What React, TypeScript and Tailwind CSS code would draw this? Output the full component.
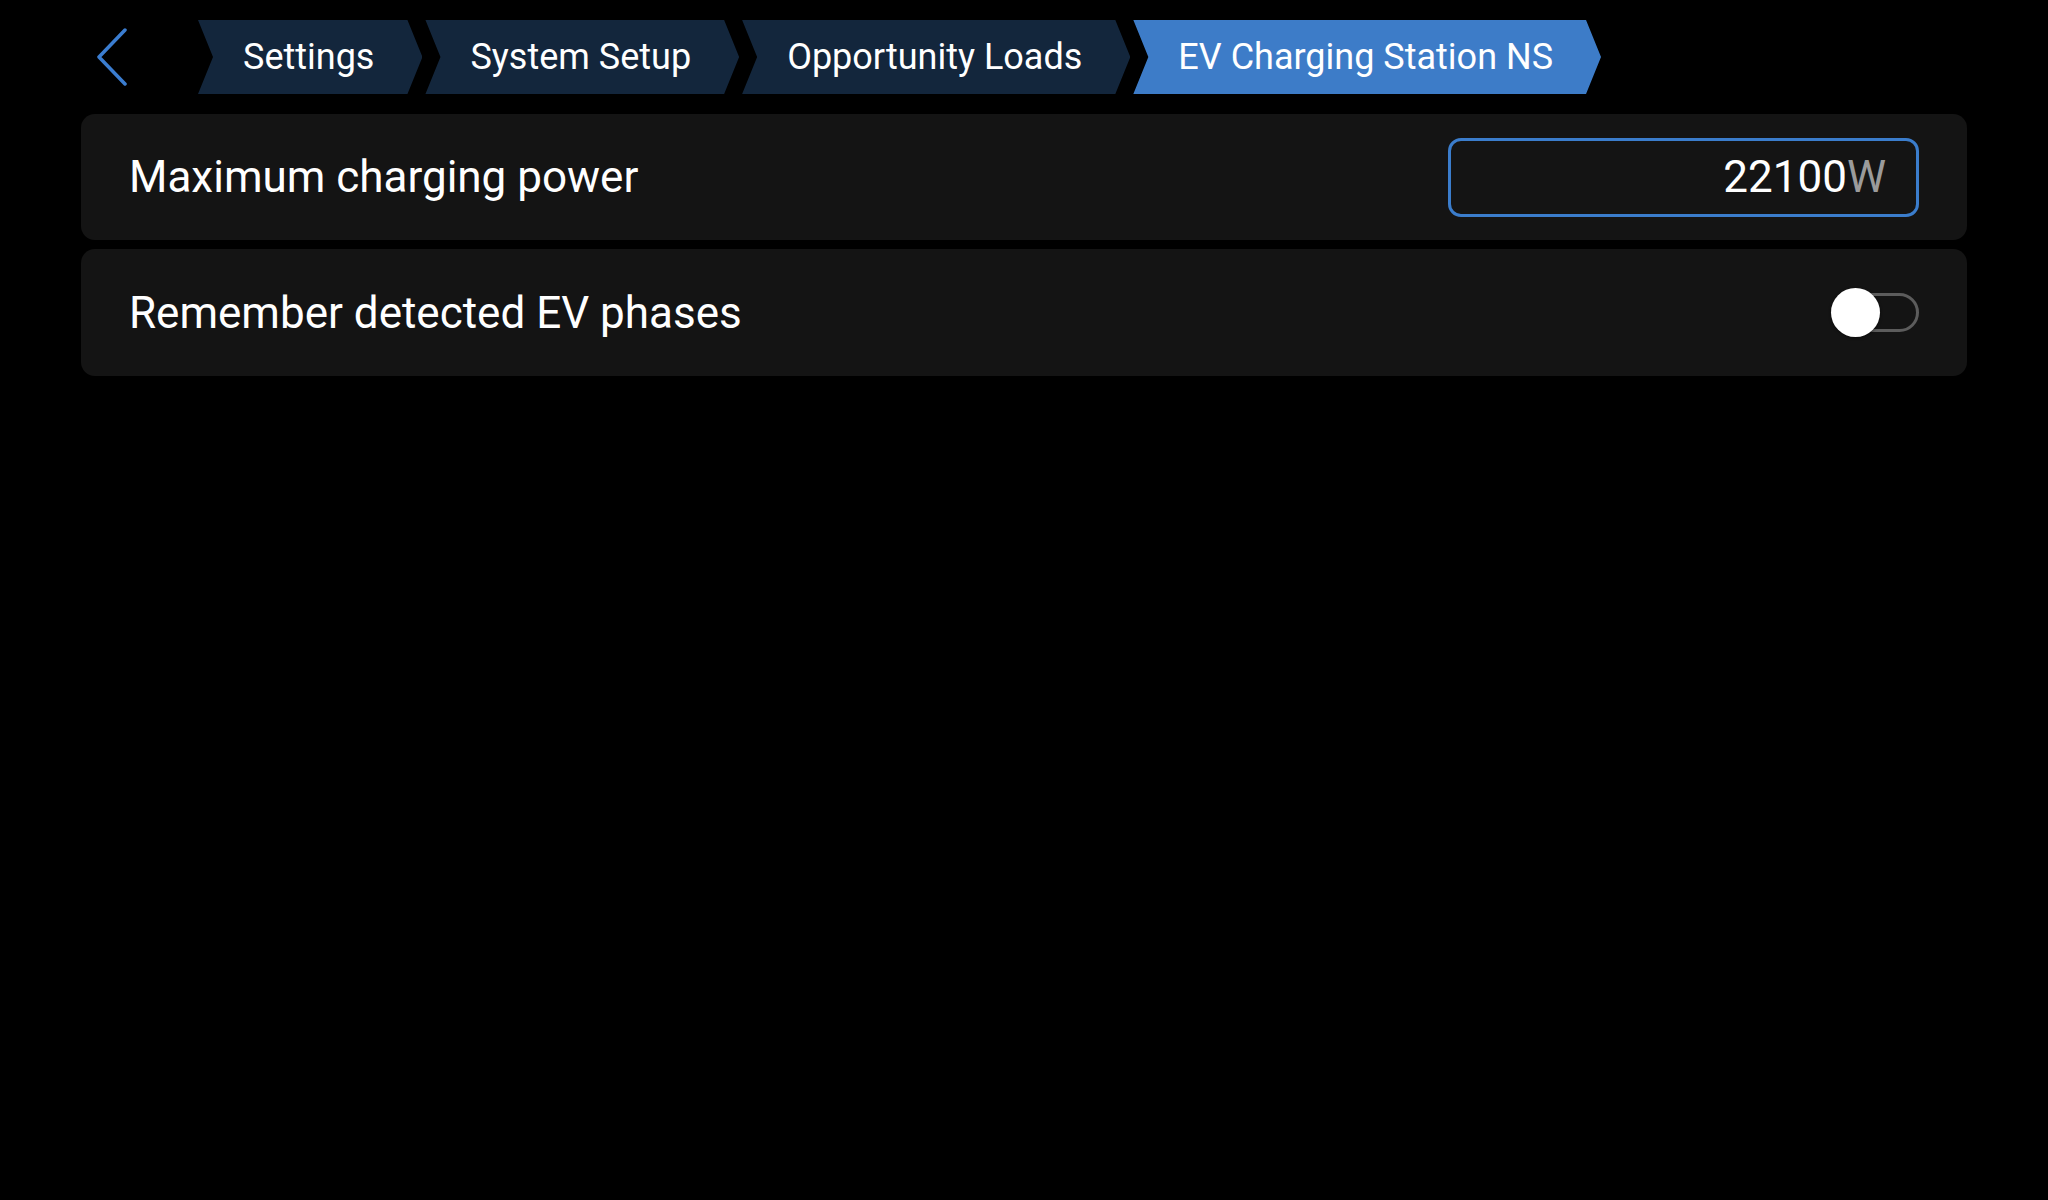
import { useState } from 'react';

const crumbs = ['Settings', 'System Setup', 'Opportunity Loads', 'EV Charging Station NS'];

function Crumb({ label, active }: { label: string; active: boolean }) {
  return (
    <div
      className={`flex h-[74px] items-center pl-[45px] pr-[48px] text-[36px] text-white [clip-path:polygon(0_0,calc(100%-15px)_0,100%_50%,calc(100%-15px)_100%,0_100%,15px_50%)] ${
        active ? 'bg-[#3d7cc8]' : 'bg-[#13263c]'
      }`}
    >
      {label}
    </div>
  );
}

function Toggle() {
  const [on, setOn] = useState(false);
  return (
    <button
      type="button"
      onClick={() => setOn(!on)}
      className="relative flex h-[50px] w-[88px] items-center"
    >
      <span
        className={`ml-[4px] h-[39px] w-[85px] rounded-full border-[3px] ${
          on ? 'border-[#3d7cc8] bg-[#3d7cc8]' : 'border-[#5c5c5c] bg-[#141414]'
        }`}
      />
      <span
        className={`absolute top-0 h-[49px] w-[49px] rounded-full bg-white shadow-[0_1px_3px_rgba(0,0,0,0.5)] ${
          on ? 'left-[38px]' : 'left-0'
        }`}
      />
    </button>
  );
}

export default function App() {
  return (
    <div className="h-[1200px] w-[2048px] bg-black font-['Roboto',sans-serif] text-white">
      {/* Breadcrumb bar */}
      <div className="flex items-center pt-[20px]">
        <div className="flex w-[198px] items-center pl-[96px]">
          <svg width="32" height="58" viewBox="0 0 32 58" fill="none">
            <path d="M29 2 L3 29 L29 56" stroke="#3b7dd0" strokeWidth="3.5" strokeLinecap="round" strokeLinejoin="round" />
          </svg>
        </div>
        <div className="flex gap-[3px]">
          {crumbs.map((c, i) => (
            <Crumb key={c} label={c} active={i === crumbs.length - 1} />
          ))}
        </div>
      </div>

      {/* Settings list */}
      <div className="flex flex-col gap-[9px] px-[81px] pt-[20px]">
        <div className="flex h-[126px] items-center justify-between rounded-[14px] bg-[#141414] pl-[48px] pr-[48px]">
          <span className="text-[44px]">Maximum charging power</span>
          <div className="flex h-[79px] w-[471px] items-center justify-end rounded-[13px] border-[3px] border-[#3b7dcc] pr-[30px] text-[44px]">
            <span>22100</span>
            <span className="text-[#9b9b9b]">W</span>
          </div>
        </div>
        <div className="flex h-[127px] items-center justify-between rounded-[14px] bg-[#141414] pl-[48px] pr-[48px]">
          <span className="text-[44px]">Remember detected EV phases</span>
          <Toggle />
        </div>
      </div>
    </div>
  );
}
